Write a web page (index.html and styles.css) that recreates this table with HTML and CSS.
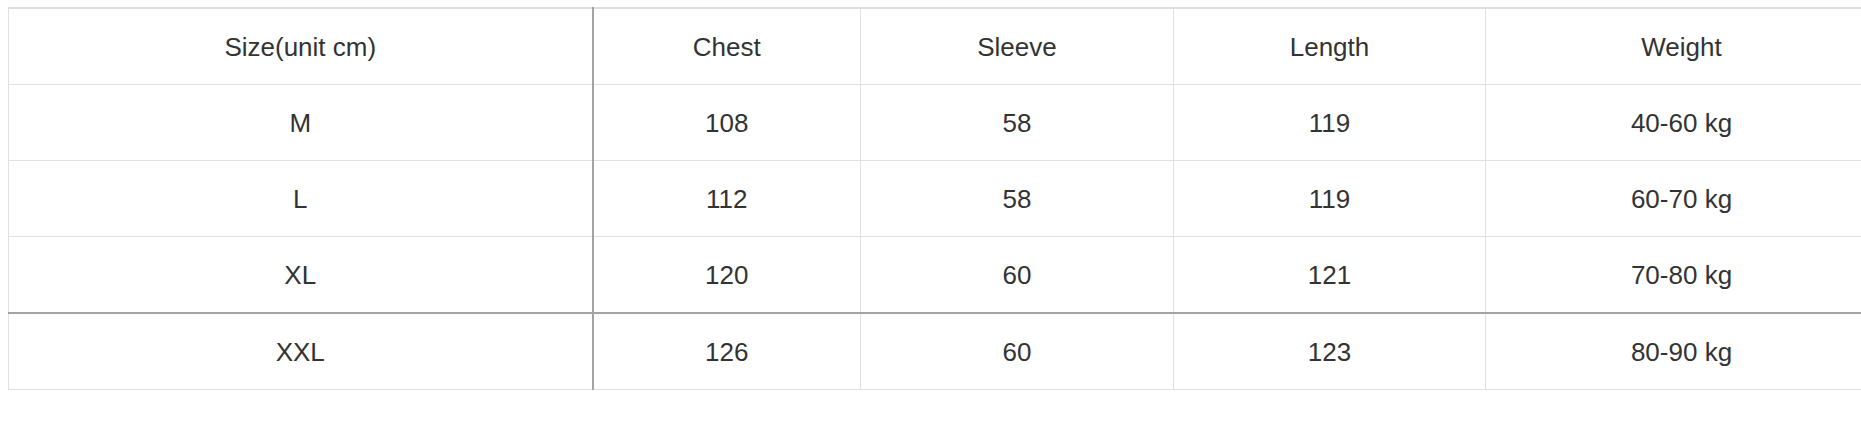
FILE: index.html
```html
<!DOCTYPE html>
<html lang="en">
<head>
<meta charset="utf-8">
<title>Size chart</title>
<link rel="stylesheet" href="styles.css">
</head>
<body>
<table class="size-table">
  <colgroup>
    <col class="c1"><col class="c2"><col class="c3"><col class="c4"><col class="c5">
  </colgroup>
  <tr class="head">
    <td class="first">Size(unit cm)</td>
    <td>Chest</td>
    <td>Sleeve</td>
    <td>Length</td>
    <td>Weight</td>
  </tr>
  <tr>
    <td class="first">M</td>
    <td>108</td>
    <td>58</td>
    <td>119</td>
    <td>40-60 kg</td>
  </tr>
  <tr>
    <td class="first">L</td>
    <td>112</td>
    <td>58</td>
    <td>119</td>
    <td>60-70 kg</td>
  </tr>
  <tr>
    <td class="first">XL</td>
    <td>120</td>
    <td>60</td>
    <td>121</td>
    <td>70-80 kg</td>
  </tr>
  <tr class="split">
    <td class="first">XXL</td>
    <td>126</td>
    <td>60</td>
    <td>123</td>
    <td>80-90 kg</td>
  </tr>
</table>
</body>
</html>
```

FILE: styles.css
```css
html, body {
  margin: 0;
  padding: 0;
  background: #ffffff;
  overflow: hidden;
}

body {
  padding: 7px 0 0 8px;
  font-family: "Liberation Sans", Arial, sans-serif;
  color: #333333;
}

.size-table {
  border-collapse: collapse;
  table-layout: fixed;
  width: 1869px;
  border-top: 2px solid #dedede;
  border-left: 1px solid #dedede;
}

.c1 { width: 584px; }
.c2 { width: 268px; }
.c3 { width: 313px; }
.c4 { width: 312px; }
.c5 { width: 392px; }

.size-table td {
  height: 75px;
  padding: 0;
  text-align: center;
  vertical-align: middle;
  border: 1px solid #e0e0e0;
  font-size: 26px;
  line-height: 1;
}

.size-table tr.head td {
  height: 75px;
}

.size-table td.first {
  border-right: 2px solid #a3a3a3;
}

.size-table tr.split td {
  border-top: 2px solid #a3a3a3;
}
```
